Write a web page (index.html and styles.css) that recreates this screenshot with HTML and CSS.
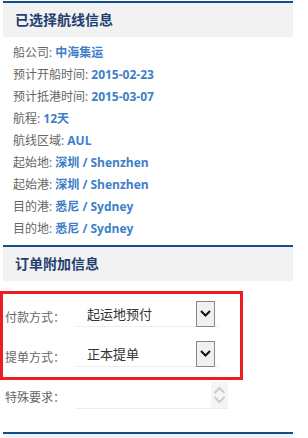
FILE: index.html
```html
<!DOCTYPE html>
<html>
<head>
    <meta charset="utf-8">
    <title>航线信息</title>
    <link rel="stylesheet" href="styles.css">
</head>
<body>
<div class="panel">

    <div class="section">
        <h3 class="section-title">已选择航线信息</h3>
        <ul class="info">
            <li>船公司: <b>中海集运</b></li>
            <li>预计开船时间: <b>2015-02-23</b></li>
            <li>预计抵港时间: <b>2015-03-07</b></li>
            <li>航程: <b>12天</b></li>
            <li>航线区域: <b>AUL</b></li>
            <li>起始地: <b>深圳 / Shenzhen</b></li>
            <li>起始港: <b>深圳 / Shenzhen</b></li>
            <li>目的港: <b>悉尼 / Sydney</b></li>
            <li>目的地: <b>悉尼 / Sydney</b></li>
        </ul>
    </div>

    <div class="section">
        <h3 class="section-title">订单附加信息</h3>
        <div class="highlight">
            <div class="form-row">
                <label class="form-label">付款方式：</label>
                <div class="select">
                    <span class="select-text">起运地预付</span>
                    <span class="select-btn">
                        <svg width="11" height="7" viewBox="0 0 11 7"><path d="M1 1 L5.5 5.5 L10 1" fill="none" stroke="#111" stroke-width="2"/></svg>
                    </span>
                </div>
            </div>
            <div class="form-row">
                <label class="form-label">提单方式：</label>
                <div class="select">
                    <span class="select-text">正本提单</span>
                    <span class="select-btn">
                        <svg width="11" height="7" viewBox="0 0 11 7"><path d="M1 1 L5.5 5.5 L10 1" fill="none" stroke="#111" stroke-width="2"/></svg>
                    </span>
                </div>
            </div>
        </div>
        <div class="form-row plain">
            <label class="form-label">特殊要求：</label>
            <div class="textarea">
                <span class="spin">
                    <svg width="13" height="8" viewBox="0 0 13 8"><path d="M1.5 7 L6.5 2 L11.5 7" fill="none" stroke="#ccc" stroke-width="2"/></svg>
                    <svg width="13" height="8" viewBox="0 0 13 8"><path d="M1.5 1 L6.5 6 L11.5 1" fill="none" stroke="#ccc" stroke-width="2"/></svg>
                </span>
            </div>
        </div>
    </div>

    <div class="section">
        <h3 class="section-title"></h3>
    </div>

</div>
</body>
</html>
```

FILE: styles.css
```css
*
{
	margin: 0;
	padding: 0;
}
body
{
	font-family: "Open Sans", "Noto Sans CJK SC", sans-serif;
	background: #fff;
	overflow: hidden;
}
.panel
{
	width: 290px;
	margin: 1px 0 0 3px;
}
.section
{
	border-top: 2px solid #0f4f8c;
}
.section-title
{
	background: #f2f2f2;
	height: 34px;
	line-height: 34px;
	padding-left: 12px;
	font-size: 14px;
	font-weight: bold;
	color: #1e3f70;
}
.info
{
	list-style: none;
	padding: 5px 10px;
	font-size: 12px;
	line-height: 22px;
	color: #666;
}
.info b
{
	color: #3d7fc8;
	font-weight: bold;
}
.highlight
{
	border: 3px solid #ee1c25;
	margin: 10px 50px 0 -3px;
	padding: 0 0 3px 0;
}
.form-row
{
	display: flex;
	align-items: center;
	height: 40px;
	padding-left: 2px;
}
.form-row.plain
{
	height: 28px;
	margin-top: 2px;
	margin-bottom: 22px;
	align-items: flex-start;
}
.form-label
{
	width: 71px;
	font-size: 12px;
	color: #666;
	padding-top: 6px;
}
.select
{
	width: 143px;
	height: 26px;
	display: flex;
	align-items: center;
	justify-content: space-between;
	border-bottom: 1px solid #eee;
	box-sizing: border-box;
	padding: 0 4px 0 11px;
}
.select-text
{
	font-size: 13px;
	color: #333;
}
.select-btn
{
	width: 19px;
	height: 26px;
	box-sizing: border-box;
	border: 1px solid #888;
	background: #f0f0f0;
	display: flex;
	align-items: center;
	justify-content: center;
}
.textarea
{
	width: 152px;
	height: 27px;
	box-sizing: border-box;
	border-bottom: 1px solid #eee;
	display: flex;
	justify-content: flex-end;
}
.spin
{
	width: 17px;
	background: #f5f5f5;
	display: flex;
	flex-direction: column;
	align-items: center;
	justify-content: center;
	gap: 2px;
}
```
